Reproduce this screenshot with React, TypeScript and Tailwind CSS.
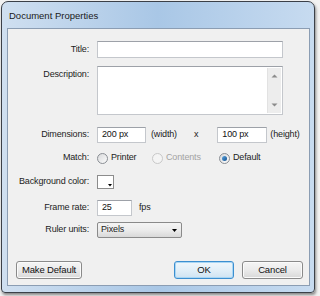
import React from "react";

const Label = ({ children, top }: { children: React.ReactNode; top?: boolean }) => (
  <div
    className={`w-[82px] shrink-0 flex justify-end pr-[1px] ${top ? "items-start pt-[1px]" : "items-center"}`}
  >
    {children}
  </div>
);

const Field = ({ w, h, children }: { w: string; h: string; children?: React.ReactNode }) => (
  <div
    className={`${w} ${h} bg-white border border-[#c4c7cc] border-t-[#9da1a8] flex items-center pl-[4px] text-[#111]`}
  >
    {children}
  </div>
);

const Radio = ({ checked, disabled }: { checked?: boolean; disabled?: boolean }) => (
  <div
    className={`w-[11px] h-[11px] rounded-full border flex items-center justify-center ${
      disabled
        ? "border-[#c8c8c8] bg-[#f4f4f4]"
        : "border-[#8a8e94] bg-gradient-to-br from-[#d9dadc] to-[#fbfbfb]"
    }`}
  >
    {checked && (
      <div className="w-[5px] h-[5px] rounded-full bg-gradient-to-br from-[#5fa7e0] to-[#0d4f8f]" />
    )}
  </div>
);

const Button = ({ w, children, primary }: { w: string; children: React.ReactNode; primary?: boolean }) => (
  <div
    className={`${w} h-[18px] rounded-[3px] border flex items-center justify-center text-[9.5px] text-[#111] ${
      primary
        ? "border-[#3c8fd0] bg-gradient-to-b from-[#f0f7fc] via-[#e2eff8] to-[#cfe3f2] shadow-[inset_0_0_0_1px_#a9d6f4]"
        : "border-[#8a8a8a] bg-gradient-to-b from-[#f5f5f5] via-[#ebebeb] to-[#d8d8d8] shadow-[inset_0_0_0_1px_#fbfbfb]"
    }`}
  >
    {children}
  </div>
);

export default function App() {
  return (
    <div className="w-[320px] h-[296px] bg-[#f2f2f2] pt-[1px] pl-[1px] font-['Liberation_Sans',Arial,sans-serif] overflow-hidden">
      <div className="w-[314px] h-[292px] rounded-t-[7px] rounded-b-[4px] border border-[#3b4048] bg-gradient-to-r from-[#cfdff0] via-[#a9c7e6] to-[#c7dbf0] shadow-[1px_2px_3px_rgba(0,0,0,0.45)] flex flex-col pl-[5px] pr-[4px] pb-[6px]">
        <div className="h-[26px] shrink-0 flex items-center pl-[2px] pt-[2px] text-[9.5px] text-[#1a1a1a]">
          Document Properties
        </div>
        <div className="flex-1 border border-[#8b9db3] bg-[#f0f0f0] flex flex-col text-[9px] tracking-[-0.15px] text-[#1c1c1c]">
          {/* Title */}
          <div className="mt-[12px] h-[17px] flex gap-[7px]">
            <Label>Title:</Label>
            <Field w="w-[186px]" h="h-[17px]" />
          </div>
          {/* Description */}
          <div className="mt-[8px] h-[49px] flex gap-[7px]">
            <Label top>
              <span className="pt-[1px]">Description:</span>
            </Label>
            <div className="w-[186px] h-[49px] bg-white border border-[#c4c7cc] border-t-[#9da1a8] flex justify-end p-[1px]">
              <div className="w-[14px] h-full bg-[#ededed] border-l border-[#e2e2e2] flex flex-col items-center justify-between py-[6px]">
                <svg width="7" height="4" viewBox="0 0 7 4">
                  <path d="M0.5 3.5 L3.5 0.5 L6.5 3.5 Z" fill="#8c8c8c" />
                </svg>
                <svg width="7" height="4" viewBox="0 0 7 4">
                  <path d="M0.5 0.5 L3.5 3.5 L6.5 0.5 Z" fill="#8c8c8c" />
                </svg>
              </div>
            </div>
          </div>
          {/* Dimensions */}
          <div className="mt-[12px] h-[16px] flex gap-[7px] items-center">
            <Label>Dimensions:</Label>
            <Field w="w-[49px]" h="h-[16px]">200 px</Field>
            <span className="ml-[-2px]">(width)</span>
            <span className="ml-[10px]">x</span>
            <div className="ml-[12px]">
              <Field w="w-[50px]" h="h-[16px]">100 px</Field>
            </div>
            <span className="ml-[-4px]">(height)</span>
          </div>
          {/* Match */}
          <div className="mt-[8px] h-[14px] flex gap-[7px] items-center">
            <Label>Match:</Label>
            <div className="flex items-center">
              <div className="w-[55px] flex items-center gap-[3px]">
                <Radio />
                <span>Printer</span>
              </div>
              <div className="w-[67px] flex items-center gap-[3px] text-[#a3a3a3]">
                <Radio disabled />
                <span>Contents</span>
              </div>
              <div className="flex items-center gap-[3px]">
                <Radio checked />
                <span>Default</span>
              </div>
            </div>
          </div>
          {/* Background color */}
          <div className="mt-[9px] h-[15px] flex gap-[7px] items-center">
            <Label>Background color:</Label>
            <div className="relative w-[17px] h-[14px] bg-white border border-[#8c8c8c]">
              <svg className="absolute right-[1px] bottom-[1px]" width="4" height="3" viewBox="0 0 4 3">
                <path d="M0 0 L4 0 L2 2.5 Z" fill="#000" />
              </svg>
            </div>
          </div>
          {/* Frame rate */}
          <div className="mt-[11px] h-[16px] flex gap-[7px] items-center">
            <Label>Frame rate:</Label>
            <Field w="w-[35px]" h="h-[16px]">25</Field>
            <span className="ml-[0px]">fps</span>
          </div>
          {/* Ruler units */}
          <div className="mt-[6px] h-[16px] flex gap-[7px] items-center">
            <Label>Ruler units:</Label>
            <div className="w-[85px] h-[16px] rounded-[2px] border border-[#8a8a8a] bg-gradient-to-b from-[#f4f4f4] via-[#ececec] to-[#d9d9d9] flex items-center justify-between pl-[3px] pr-[4px]">
              <span>Pixels</span>
              <svg width="5" height="3" viewBox="0 0 5 3">
                <path d="M0 0 L5 0 L2.5 3 Z" fill="#000" />
              </svg>
            </div>
          </div>
          {/* Buttons */}
          <div className="mt-auto mb-[6px] flex items-center pl-[8px] pr-[6px]">
            <Button w="w-[66px]">Make Default</Button>
            <div className="flex-1" />
            <Button w="w-[60px]" primary>
              OK
            </Button>
            <div className="w-[8px]" />
            <Button w="w-[61px]">Cancel</Button>
          </div>
        </div>
      </div>
    </div>
  );
}
